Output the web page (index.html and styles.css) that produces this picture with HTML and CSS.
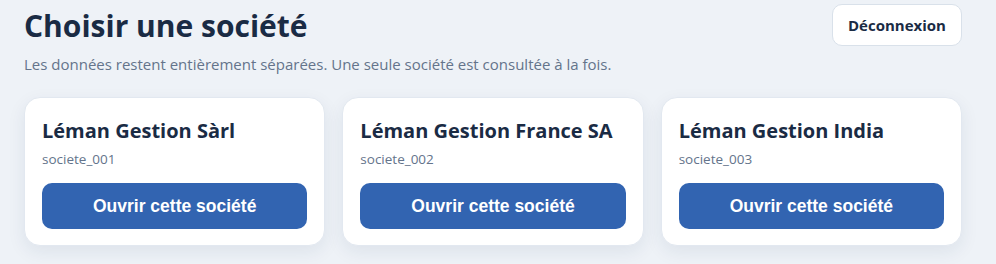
FILE: index.html
```html
<!DOCTYPE html>
<html lang="fr">
<head>
<meta charset="utf-8">
<title>Choisir une société</title>
<link rel="stylesheet" href="styles.css">
</head>
<body>
<main class="page">
  <header class="header">
    <div class="intro">
      <h1 class="title">Choisir une société</h1>
      <p class="subtitle">Les données restent entièrement séparées. Une seule société est consultée à la fois.</p>
    </div>
    <button class="logout" type="button">Déconnexion</button>
  </header>
  <section class="grid">
    <article class="card">
      <h2 class="card-title">Léman Gestion Sàrl</h2>
      <p class="card-id">societe_001</p>
      <button class="open" type="button">Ouvrir cette société</button>
    </article>
    <article class="card">
      <h2 class="card-title">Léman Gestion France SA</h2>
      <p class="card-id">societe_002</p>
      <button class="open" type="button">Ouvrir cette société</button>
    </article>
    <article class="card">
      <h2 class="card-title">Léman Gestion India</h2>
      <p class="card-id">societe_003</p>
      <button class="open" type="button">Ouvrir cette société</button>
    </article>
  </section>
</main>
</body>
</html>
```

FILE: styles.css
```css
* { box-sizing: border-box; }
html, body { margin: 0; padding: 0; }
body {
  background: #eef2f7;
  font-family: "Open Sans", "Noto Sans", sans-serif;
  color: #1a2b44;
  width: 996px;
  height: 264px;
  overflow: hidden;
}
.page {
  padding: 6px 34px 0 24px;
}
.header {
  display: flex;
  justify-content: space-between;
  align-items: flex-start;
}
.title {
  margin: 0;
  font-size: 30px;
  line-height: 40px;
  font-weight: 700;
  color: #1a2b44;
}
.subtitle {
  margin: 7px 0 0;
  font-size: 15px;
  line-height: 22px;
  color: #64748b;
}
.logout {
  margin-top: -2px;
  background: #ffffff;
  border: 1px solid #d9e1ea;
  border-radius: 10px;
  height: 42px;
  width: 130px;
  font-family: "Open Sans", "Noto Sans", sans-serif;
  font-weight: 700;
  font-size: 15px;
  color: #1a2b44;
  padding: 0;
}
.grid {
  display: grid;
  grid-template-columns: repeat(3, 1fr);
  gap: 17px;
  margin-top: 22px;
}
.card {
  background: #ffffff;
  border: 1px solid #e2e8f0;
  border-radius: 16px;
  padding: 19px 17px 16px;
  box-shadow: 0 6px 18px rgba(30, 50, 90, 0.08);
}
.card-title {
  margin: 0;
  font-size: 20px;
  line-height: 28px;
  font-weight: 700;
  color: #1a2b44;
}
.card-id {
  margin: 5px 0 0;
  font-size: 13.5px;
  line-height: 18px;
  color: #64748b;
}
.open {
  display: block;
  width: 100%;
  height: 46px;
  margin-top: 15px;
  background: #3264b1;
  border: none;
  border-radius: 10px;
  color: #ffffff;
  font-family: "Liberation Sans", Arial, sans-serif;
  font-weight: 700;
  font-size: 17.5px;
}
```
